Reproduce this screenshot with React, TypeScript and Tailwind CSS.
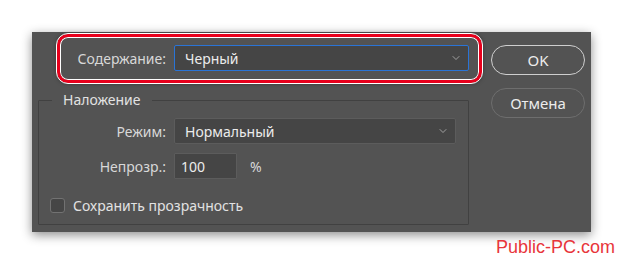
import { ChevronDown } from "lucide-react"

const font = { fontFamily: '"Noto Sans", "Open Sans", sans-serif' }

function Select({ value, width, focused }: { value: string; width: string; focused?: boolean }) {
  return (
    <div
      className={`${width} h-[26px] flex items-center justify-between pl-[10px] pr-[6px] bg-[#454545] rounded-[2px] border ${
        focused ? "border-[#2a74d6]" : "border-[#5c5c5c]"
      }`}
    >
      <span className="text-[14px] text-[#ececec]">{value}</span>
      <ChevronDown className="w-[12px] h-[12px] text-[#bdbdbd]" strokeWidth={1.5} />
    </div>
  )
}

export default function App() {
  return (
    <div className="w-[623px] h-[264px] bg-white relative overflow-hidden" style={font}>
      <div className="ml-[32px] mt-[32px] w-[559px] h-[200px] bg-[#535353] relative flex shadow-[0_3px_10px_rgba(0,0,0,0.45)]">
        {/* left column */}
        <div className="w-[437px] flex flex-col">
          <div className="mt-[13px] flex items-center">
            <span className="w-[134px] text-right text-[14px] text-[#d8d8d8]">Содержание:</span>
            <div className="ml-[8px]">
              <Select value="Черный" width="w-[295px]" focused />
            </div>
          </div>

          <fieldset className="ml-[6px] mt-[19px] w-[431px] h-[135px] border border-[#414141] rounded-[1px]">
            <legend className="ml-[13px] px-[11px] text-[14px] leading-[20px] text-[#e2e2e2]">Наложение</legend>
            <div className="mt-[8px] flex items-center">
              <span className="w-[127px] text-right text-[14px] text-[#d8d8d8]">Режим:</span>
              <div className="ml-[8px]">
                <Select value="Нормальный" width="w-[282px]" />
              </div>
            </div>
            <div className="mt-[9px] flex items-center">
              <span className="w-[127px] text-right text-[14px] text-[#d8d8d8]">Непрозр.:</span>
              <div className="ml-[8px] w-[63px] h-[26px] flex items-center pl-[6px] bg-[#454545] border border-[#5c5c5c] rounded-[1px] text-[14px] text-[#ececec]">
                100
              </div>
              <span className="ml-[13px] text-[14px] text-[#d8d8d8]">%</span>
            </div>
            <div className="mt-[16px] ml-[11px] flex items-center">
              <span className="w-[15px] h-[15px] rounded-[3px] border border-[#727272] bg-[#464646]" />
              <span className="ml-[8px] text-[14px] text-[#e2e2e2]">Сохранить прозрачность</span>
            </div>
          </fieldset>
        </div>

        {/* buttons */}
        <div className="ml-[22px] mt-[13px] flex flex-col gap-[13px]">
          <button className="w-[94px] h-[30px] rounded-full border border-[#cfcfcf] text-[15px] text-[#ececec]">
            OK
          </button>
          <button className="w-[94px] h-[30px] rounded-full border border-[#6e6e6e] text-[15px] text-[#ececec]">
            Отмена
          </button>
        </div>

        {/* annotation highlight */}
        <div className="absolute left-[25px] top-[2px] w-[425px] h-[49px] rounded-[11px] border-[3px] border-[#e8001c] outline outline-1 outline-white shadow-[inset_0_0_0_1px_#ffffff,0_0_4px_rgba(0,0,0,0.5)]" />
      </div>

      <span
        className="absolute right-[8px] bottom-[3px] text-[18px] text-[#e8353a]"
        style={{ fontFamily: '"Liberation Sans", Arial, sans-serif' }}
      >
        Public-PC.com
      </span>
    </div>
  )
}
